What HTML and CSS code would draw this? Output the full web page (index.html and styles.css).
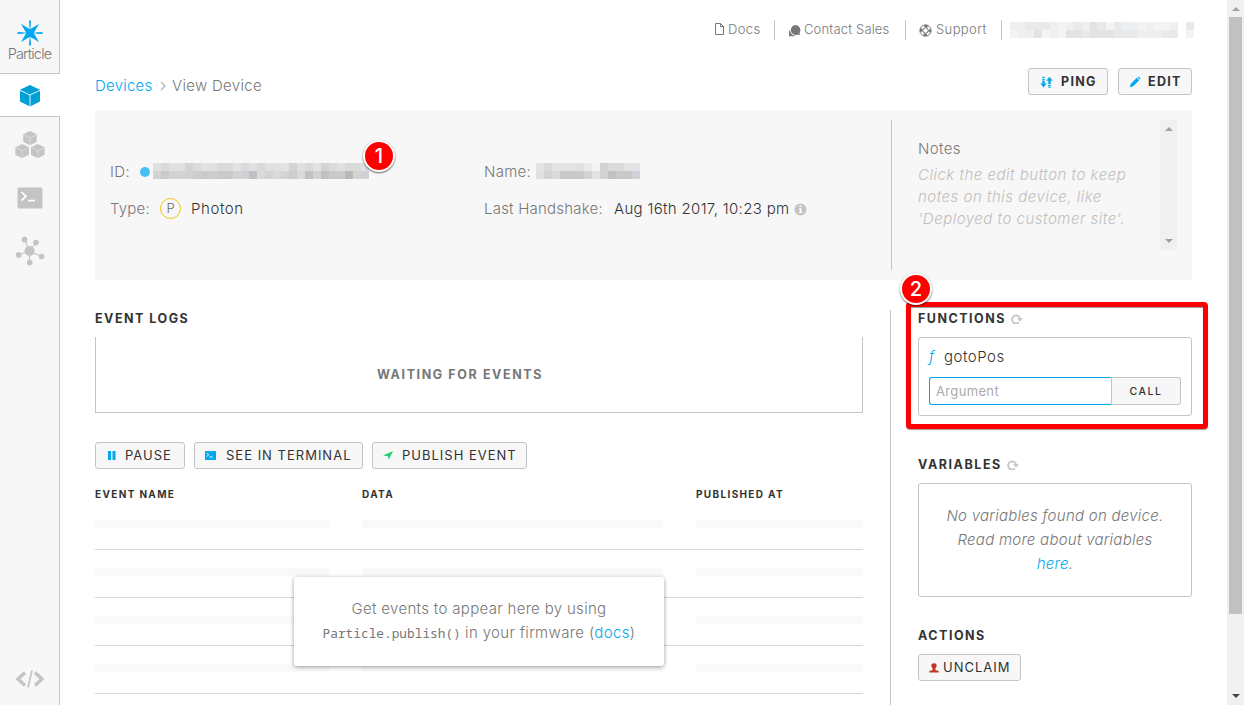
FILE: index.html
```html
<!DOCTYPE html>
<html lang="en">
<head>
<meta charset="utf-8">
<title>View Device</title>
<link rel="stylesheet" href="styles.css">
</head>
<body>
<div class="app">
  <nav class="sidebar">
    <div class="brand">
      <svg width="26" height="26" viewBox="0 0 26 26" fill="#00a8f0"><path d="M4 4 13 9.300 22 4 16.700 13 22 22 13 16.700 4 22 9.300 13Z"/><path d="M12.300 5.500 12 0.500h2L13.700 5.500 13 11ZM12.300 20.500 12 25.500h2L13.700 20.500 13 15ZM5.500 12.300.5 12v2L5.500 13.700 11 13ZM20.500 12.300 25.500 12v2L20.500 13.700 15 13Z"/></svg>
      <span class="brand-name">Particle</span>
    </div>
    <a class="side-item active"><svg width="22" height="24" viewBox="0 0 22 24"><path d="M11 1 21 5.800V17.500L11 22.500 1 17.500V5.800Z" fill="#009fd6"/><path d="M1 6.300 11 11 21 6.300M11 11V23" fill="none" stroke="#d8f2fc" stroke-width="1"/></svg></a>
    <a class="side-item cubes"><svg width="30" height="30" viewBox="0 0 30 30"><g fill="#c4c4c4"><path d="M15 1 21.800 4.300V11.700L15 15.200 8.200 11.700V4.300Z"/><path d="M7.200 14 14 17.300V24.700L7.200 28.200.4 24.700V17.300Z"/><path d="M22.800 14 29.600 17.300V24.700L22.800 28.200 16 24.700V17.300Z"/></g><path d="M8.500 4.700 15 8 21.500 4.700M15 8V15M.7 17.700 7.200 21 13.700 17.700M7.200 21V28M16.300 17.700 22.800 21 29.300 17.700M22.800 21V28" fill="none" stroke="#e2e2e2" stroke-width=".7"/></svg></a>
    <a class="side-item"><svg width="26" height="22" viewBox="0 0 26 22"><rect x=".5" y=".5" width="25" height="21" rx="1.500" fill="#c4c4c4"/><path d="M4.500 5 9 9.300 4.500 13.600M11 13.600h7" fill="none" stroke="#fff" stroke-width="1.700"/></svg></a>
    <a class="side-item"><svg width="30" height="30" viewBox="0 0 30 30" fill="#c4c4c4"><path d="M14.500 15 9.500 3.500M14.500 15 21 6.500M14.500 15 3.500 19M14.500 15 26.500 20.500M14.500 15V27" stroke="#c4c4c4" stroke-width="1.200"/><circle cx="14.500" cy="15" r="5"/><circle cx="9.500" cy="3.700" r="2.900"/><circle cx="21" cy="6.600" r="2.800"/><circle cx="3.700" cy="18.900" r="2.800"/><circle cx="26.500" cy="20.500" r="2.800"/><circle cx="14.700" cy="26.600" r="2.800"/></svg></a>
    <a class="side-item code"><svg width="30" height="20" viewBox="0 0 30 20" fill="none" stroke="#c4c4c4"><path d="M10 3.500 3 10 10 16.500M20 3.500 27 10 20 16.500" stroke-width="3.400"/><path d="M17 1.500 13 18.500" stroke-width="1.700"/></svg></a>
  </nav>

  <main class="content">
    <header class="topbar">
      <a class="top-link docs"><svg width="9" height="12" viewBox="0 0 9 12" fill="none" stroke="#777"><path d="M.5.5H5.500L8.500 3.500V11.500H.5ZM5.500.5V3.500H8.500"/></svg><span>Docs</span></a>
      <a class="top-link sales"><svg width="13" height="13" viewBox="0 0 13 13" fill="#777"><path d="M7.500 1a5 5 0 0 1 4 7.800l.8 2.200-2.300-.5A5 5 0 1 1 7.500 1Z"/><path d="M2 5.500A5.800 5.800 0 0 0 7.500 11.700 5 5 0 0 1 3.500 12L.8 12.500 1.200 10A5 5 0 0 1 2 5.500Z"/></svg><span>Contact Sales</span></a>
      <a class="top-link support"><svg width="13" height="13" viewBox="0 0 13 13" fill="none" stroke="#777"><circle cx="6.500" cy="6.500" r="5.600" stroke-width="1"/><circle cx="6.500" cy="6.500" r="4.300" stroke-width="2.800" stroke-dasharray="3.380 3.380" stroke-dashoffset="1.690"/><circle cx="6.500" cy="6.500" r="2.700"/></svg><span>Support</span></a>
      <span class="user"><span class="mosaic m21"><i class="p1"></i><i class="p1"></i><i class="p2"></i><i class="p2"></i><i class="p2"></i><i class="p1"></i><i class="p0"></i><i class="p1"></i><i class="p2"></i><i class="p1"></i><i class="p3"></i><i class="p2"></i><i class="p0"></i><i class="p2"></i><i class="p1"></i><i class="p1"></i><i class="p0"></i><i class="p1"></i><i class="p0"></i><i class="p0"></i><i class="p1"></i><i class="p0"></i><i class="p1"></i><i class="p1"></i><i class="p3"></i><i class="p0"></i><i class="p1"></i><i class="p0"></i><i class="p3"></i><i class="p3"></i><i class="p2"></i><i class="p3"></i><i class="p3"></i><i class="p3"></i><i class="p2"></i><i class="p2"></i><i class="p2"></i><i class="p1"></i><i class="p1"></i><i class="p1"></i><i class="p2"></i><i class="p2"></i></span><span class="mosaic m1"><i class="p2"></i><i class="p0"></i></span></span>
    </header>

    <div class="title-row">
      <div class="crumbs"><a class="link">Devices</a><svg width="6" height="10" viewBox="0 0 6 10" fill="none" stroke="#bbb" stroke-width="1.500"><path d="M1 1 5 5 1 9"/></svg><span class="crumb-now">View Device</span></div>
      <div class="title-actions">
        <button class="btn strong ping"><svg width="13" height="12" viewBox="0 0 13 12" fill="#00a8f0"><path d="M2.300 4.500h2.400v3h2L3.500 11.500.3 7.500h2ZM2.300 2.700h2.400v1.200H2.300ZM2.300 .8h2.400v1.200H2.300Z"/><path d="M8.300 8h2.400V4.800h2L9.500.8 6.300 4.800h2ZM8.300 8.700h2.400v1.200H8.300ZM8.300 10.600h2.400v1.200H8.300Z"/></svg><span>PING</span></button>
        <button class="btn strong edit"><svg width="12" height="12" viewBox="0 0 12 12" fill="#00a8f0"><path d="M.8 11.200 1.700 7.900 7.800 1.800 10.200 4.200 4.100 10.300ZM8.500 1.200 9.500.4 11.600 2.500 10.800 3.500Z"/></svg><span>EDIT</span></button>
      </div>
    </div>

    <section class="info">
      <div class="info-col first">
        <div class="field"><span class="label">ID:</span><b class="dot"></b><span class="mosaic m27"><i class="p4"></i><i class="p5"></i><i class="p4"></i><i class="p4"></i><i class="p6"></i><i class="p5"></i><i class="p3"></i><i class="p4"></i><i class="p5"></i><i class="p5"></i><i class="p3"></i><i class="p5"></i><i class="p4"></i><i class="p5"></i><i class="p4"></i><i class="p4"></i><i class="p3"></i><i class="p6"></i><i class="p4"></i><i class="p5"></i><i class="p3"></i><i class="p6"></i><i class="p5"></i><i class="p4"></i><i class="p5"></i><i class="p5"></i><i class="p4"></i><i class="p6"></i><i class="p7"></i><i class="p6"></i><i class="p6"></i><i class="pb"></i><i class="pw"></i><i class="p7"></i><i class="pw"></i><i class="p7"></i><i class="p7"></i><i class="p6"></i><i class="pb"></i><i class="p8"></i><i class="p5"></i><i class="p6"></i><i class="p5"></i><i class="p6"></i><i class="pw"></i><i class="p5"></i><i class="p8"></i><i class="p6"></i><i class="p8"></i><i class="p7"></i><i class="p7"></i><i class="p9"></i><i class="p6"></i><i class="pb"></i></span></div>
        <div class="field"><span class="label type">Type:</span><span class="badge">P</span><span class="value">Photon</span></div>
        <span class="marker one">1</span>
      </div>
      <div class="info-col second">
        <div class="field"><span class="label name">Name:</span><span class="mosaic m13"><i class="p3"></i><i class="p5"></i><i class="p3"></i><i class="p3"></i><i class="p3"></i><i class="p4"></i><i class="p2"></i><i class="p0"></i><i class="p6"></i><i class="p5"></i><i class="p5"></i><i class="p3"></i><i class="p3"></i><i class="p4"></i><i class="p6"></i><i class="p5"></i><i class="p7"></i><i class="p7"></i><i class="p7"></i><i class="p6"></i><i class="p3"></i><i class="p6"></i><i class="p8"></i><i class="p7"></i><i class="p7"></i><i class="pb"></i></span></div>
        <div class="field"><span class="label shake">Last Handshake:</span><span class="value date">Aug 16th 2017, 10:23 pm</span><svg class="info-icon" width="13" height="13" viewBox="0 0 13 13"><circle cx="6.500" cy="6.500" r="6" fill="#c4c4c4"/><path d="M5.500 2.500h2v1.500h-2ZM5 5.300h2.500V9h.8v1H4.900V9h.8V6.300H5Z" fill="#fff"/></svg></div>
      </div>
      <div class="notes">
        <div class="notes-text"><h3>Notes</h3><p>Click the edit button to keep<br>notes on this device, like<br>'Deployed to customer site'.</p></div>
        <div class="notes-scroll"><i class="arrow up"></i><i class="arrow down"></i></div>
      </div>
    </section>

    <div class="columns">
      <section class="logs">
        <h2>EVENT LOGS</h2>
        <div class="waiting">WAITING FOR EVENTS</div>
        <div class="log-actions">
          <button class="btn pause"><svg width="8" height="9" viewBox="0 0 8 9" fill="#00a8f0"><path d="M0 0h3v9H0ZM4.500 0h3v9h-3Z"/></svg><span>PAUSE</span></button>
          <button class="btn terminal"><svg width="11" height="9" viewBox="0 0 11 9"><path d="M0 0h11v9H0Z" fill="#00a8f0"/><path d="M1.700 2 3.700 3.800 1.700 5.600M4.500 6h3" fill="none" stroke="#fff"/></svg><span>SEE IN TERMINAL</span></button>
          <button class="btn publish"><svg width="10" height="9" viewBox="0 0 10 9" fill="#2ecc71"><path d="M10 0 5.800 8.800 4.900 5.300 0 4.600Z"/></svg><span>PUBLISH EVENT</span></button>
        </div>
        <div class="table">
          <div class="row head"><span>EVENT NAME</span><span>DATA</span><span>PUBLISHED AT</span></div>
          <div class="row"><i></i><i></i><i></i></div>
          <div class="row"><i></i><i></i><i></i></div>
          <div class="row"><i></i><i></i><i></i></div>
          <div class="row"><i></i><i></i><i></i></div>
          <div class="hint"><span class="hint-a">Get events to appear here by using</span><br><code>Particle.publish()</code> <span class="hint-b">in your firmware (<a class="link">docs</a>)</span></div>
        </div>
      </section>

      <aside class="side">
        <section class="functions">
          <h2><span>FUNCTIONS</span><svg width="12" height="10" viewBox="0 0 12 10"><path d="M7.900 8.300A4 4 0 1 1 9 4.500" fill="none" stroke="#c4c4c4" stroke-width="1.700"/><path d="M6 4.300H12L9 7.500Z" fill="#c4c4c4"/></svg></h2>
          <div class="fn-box">
            <div class="fn-name"><em>f</em>gotoPos</div>
            <div class="fn-call"><input class="arg" placeholder="Argument"><button class="call">CALL</button></div>
          </div>
          <div class="highlight"></div>
          <span class="marker two">2</span>
        </section>
        <section class="variables">
          <h2><span class="wide">VARIABLES</span><svg width="12" height="10" viewBox="0 0 12 10"><path d="M7.900 8.300A4 4 0 1 1 9 4.500" fill="none" stroke="#c4c4c4" stroke-width="1.700"/><path d="M6 4.300H12L9 7.500Z" fill="#c4c4c4"/></svg></h2>
          <p class="var-box">No variables found on device.<br>Read more about variables<br><a class="link">here</a>.</p>
        </section>
        <section class="actions">
          <h2>ACTIONS</h2>
          <button class="btn unclaim"><svg width="10" height="10" viewBox="0 0 10 10" fill="#c0392b"><path d="M5 .3C7.200 .3 7.800 1.500 7.600 3 7.500 4.300 6.800 5 6.400 5.500V7L9.700 8V9.500H.3V8L3.600 7V5.500C3.200 5 2.500 4.300 2.400 3 2.200 1.500 2.800 .3 5 .3Z"/></svg><span>UNCLAIM</span></button>
        </section>
      </aside>
    </div>
  </main>

  <div class="scrollbar"><i class="arrow up"></i><div class="thumb"></div><i class="arrow down dark"></i></div>
</div>
</body>
</html>
```
FILE: styles.css
```css
* { box-sizing: border-box; }
body { margin: 0; height: 705px; overflow: hidden; background: #fff; color: #333; font: 360 15px/20px Inter, "Liberation Sans", sans-serif; }
h2, h3, p { margin: 0; }
svg { display: block; flex: none; }
.link { color: #00a8f0; }

.app { display: grid; grid-template-columns: 60px 1fr 17px; height: 705px; }

.sidebar { display: flex; flex-direction: column; background: #f7f7f7; border-right: 1px solid #c4c4c4; height: 705px; }
.brand { height: 74px; padding-top: 20px; display: flex; flex-direction: column; align-items: center; border-bottom: 1px solid #c4c4c4; }
.brand-name { font: 300 14.500px/16px Inter, sans-serif; letter-spacing: -0.8px; color: #777; }
.side-item { height: 53px; display: flex; align-items: center; justify-content: center; }
.side-item.active { height: 43px; padding-top: 2px; background: #fff; border-bottom: 1px solid #c4c4c4; margin-right: -1px; }
.side-item.cubes { height: 54px; margin-top: 1px; margin-bottom: -1px; }
.side-item.code { height: 20px; margin-top: auto; margin-bottom: 16px; }

.content { padding: 0 35px; height: 705px; overflow: hidden; }
.topbar { display: flex; justify-content: flex-end; height: 60px; padding-top: 20px; margin-right: -2px; }
.top-link { display: flex; align-items: center; height: 20px; font-size: 13px; letter-spacing: .38px; color: #777; border-right: 1px solid #c4c4c4; }
.top-link span { margin-top: -2px; }
.docs { width: 60px; gap: 4px; }
.docs svg { margin-top: -2px; }
.sales { width: 131px; padding-left: 13px; gap: 3px; letter-spacing: .16px; }
.support { width: 96px; padding-left: 13px; gap: 4px; }
.sales svg, .support svg { margin-top: 1px; }
.user { display: flex; gap: 8px; padding: 2px 0 0 8px; }

.mosaic { display: grid; grid-template-columns: repeat(27, 8px); grid-auto-rows: 8px; height: 16px; flex: none; }
.m21 { grid-template-columns: repeat(21, 8px); }
.m13 { grid-template-columns: repeat(13, 8px); }
.m1 { grid-template-columns: 8px; }
.p0 { background: #f4f4f3; }
.p1 { background: #eeeff0; }
.p2 { background: #e8e9ea; }
.p3 { background: #e4e3e3; }
.p4 { background: #e0e0e0; }
.p5 { background: #d9dbdb; }
.p6 { background: #d3d3d4; }
.p7 { background: #cacacb; }
.p8 { background: #c1c1c1; }
.p9 { background: #bdb6b6; }
.pb { background: #ced1d8; }
.pw { background: #d0ccc9; }

.title-row { display: flex; justify-content: space-between; height: 50px; padding-top: 8px; }
.crumbs { display: flex; align-items: center; height: 36px; }
.crumbs .link { width: 65px; letter-spacing: .22px; }
.crumb-now { margin-left: 6px; color: #777; letter-spacing: .3px; }
.title-actions { display: flex; gap: 10px; }

.btn { display: flex; align-items: center; height: 27px; margin: 0; padding: 0 10px; background: #f7f7f7; border: 1px solid #c4c4c4; border-radius: 3px; color: #333; font: 400 13px/20px Inter, sans-serif; letter-spacing: 1px; white-space: nowrap; }
.btn span { margin-top: -1px; }
.btn.strong { font-size: 12.500px; font-weight: 700; letter-spacing: 1.300px; }
.btn.strong span { margin-top: 1px; }
.ping { width: 80px; padding-left: 11px; }
.ping svg { margin-right: 8px; }
.edit { width: 74px; }
.edit svg { margin-right: 7px; }

.info { display: grid; grid-template-columns: 374px 422px 301px; height: 170px; background: #f7f7f7; }
.info-col { position: relative; padding: 43px 0 0 15px; display: flex; flex-direction: column; }
.field { display: flex; align-items: center; height: 37px; }
.label { color: #777; letter-spacing: .35px; }
.type { width: 41px; letter-spacing: .2px; }
.shake { width: 120px; letter-spacing: .22px; }
.dot { width: 10px; height: 10px; margin: 0 3px 0 10px; border-radius: 50%; background: #45c1f5; }
.first .mosaic, .second .mosaic { margin-top: -1px; }
.badge { width: 21px; height: 21px; margin: 0 10px 0 9px; border: 1px solid #f1c40f; border-radius: 50%; text-align: center; font-size: 13px; line-height: 19px; color: #666; }
.value { color: #333; letter-spacing: .58px; }
.name { width: 52px; letter-spacing: .25px; }
.date { width: 176px; margin-left: 10px; letter-spacing: .32px; white-space: nowrap; }
.info-icon { margin-left: 4px; margin-top: 1px; }
.notes { display: flex; justify-content: space-between; height: 150px; margin-top: 10px; padding: 0 15px 0 26px; border-left: 1px solid #c4c4c4; }
.notes h3 { margin-top: 18px; font-size: 15px; font-weight: 360; line-height: 22px; letter-spacing: .35px; color: #777; }
.notes p { margin-top: 4px; font: italic 360 15px/22px Inter, sans-serif; letter-spacing: .5px; color: #c0c0c0; white-space: nowrap; }
.notes-scroll { display: flex; flex-direction: column; justify-content: space-between; align-items: center; width: 17px; height: 130px; padding: 7px 0; background: #f0f0f0; }
.arrow { width: 0; height: 0; border: 4px solid transparent; }
.arrow.up { border-top: 0; border-bottom-color: #a0a0a0; }
.arrow.down { border-bottom: 0; border-top-color: #a0a0a0; }
.arrow.dark { border-top-color: #444; }

.marker { position: absolute; width: 32px; height: 32px; border: 2px solid #fff; border-radius: 50%; background: #f00; box-shadow: 0 1px 2px rgba(0, 0, 0, .6); color: #fff; font: 500 20px/28px Inter, sans-serif; text-align: center; }
.one { left: 268px; top: 30px; }
.two { left: -18px; top: -37px; }

.columns { display: grid; grid-template-columns: 768px 1fr; column-gap: 27px; padding-top: 30px; height: 425px; }
h2 { display: flex; align-items: center; height: 18px; font-size: 12.500px; line-height: 18px; font-weight: 700; letter-spacing: 1.500px; color: #333; }
h2 svg { margin-left: 5px; margin-top: -1px; }
.wide { letter-spacing: 1.550px; }
.waiting { height: 76px; margin-top: 9px; border: 1px solid #c4c4c4; border-top: 0; line-height: 75px; text-align: center; color: #777; font-size: 12.500px; font-weight: 700; letter-spacing: 1.600px; padding-right: 38px; }
.log-actions { display: flex; gap: 9px; margin-top: 29px; }
.pause { width: 90px; padding-left: 12px; }
.pause svg { margin-right: 9px; }
.terminal { width: 169px; }
.terminal svg { margin-right: 10px; }
.publish { width: 155px; }
.publish svg { margin-right: 9px; }

.table { position: relative; margin-top: 15px; }
.row { display: grid; grid-template-columns: 234px 301px 167px; column-gap: 33px; height: 48px; padding-top: 18px; border-bottom: 1px solid #d5d5d5; }
.row i { height: 8px; background: #f9f9f9; }
.head { height: 18px; padding: 0; border: 0; font-size: 10px; line-height: 20px; font-weight: 700; letter-spacing: 1.350px; }
.hint { position: absolute; left: 199px; top: 93px; width: 370px; height: 89px; padding-top: 20px; background: #fff; border-radius: 3px; box-shadow: 0 1px 4px rgba(0, 0, 0, .4); text-align: center; line-height: 24px; color: #777; white-space: nowrap; }
.hint-a { letter-spacing: .32px; }
.hint-b { letter-spacing: .36px; }
.hint code { font: 12.800px/24px "Noto Sans Mono", "DejaVu Sans Mono", monospace; }

.side { padding-left: 27px; border-left: 1px solid #c4c4c4; height: 395px; }
.functions { position: relative; height: 146px; }
.fn-box { height: 79px; margin-top: 9px; padding: 10px; border: 1px solid #c4c4c4; border-radius: 3px; }
.fn-name { height: 29px; line-height: 18px; letter-spacing: .5px; }
.fn-name em { display: inline-block; width: 15px; color: #00a8f0; }
.fn-call { display: flex; }
.arg { width: 183px; height: 28px; padding: 0 6px; border: 1px solid #00a8e6; border-right-color: #c4c4c4; border-radius: 3px 0 0 3px; font: 13px Inter, sans-serif; letter-spacing: .35px; }
.arg::placeholder { color: #aaa; }
.call { width: 69px; height: 28px; padding: 0; border: 1px solid #c4c4c4; border-left: 0; border-radius: 0 3px 3px 0; background: #f7f7f7; font: 500 10.500px Inter, sans-serif; letter-spacing: 1.500px; color: #333; }
.highlight { position: absolute; left: -12px; top: -8px; width: 302px; height: 127px; border: 5px solid #f00; border-radius: 4px; box-shadow: 0 1px 1px rgba(0, 0, 0, .4), inset 0 1px 1px rgba(0, 0, 0, .4); }
.variables { height: 171px; }
.var-box { height: 114px; margin-top: 9px; padding-top: 20px; border: 1px solid #c4c4c4; border-radius: 3px; text-align: center; font: italic 360 15px/24px Inter, sans-serif; letter-spacing: .26px; color: #777; }
.unclaim { width: 103px; margin-top: 9px; }
.unclaim svg { margin-right: 4px; }

.scrollbar { display: flex; flex-direction: column; align-items: center; height: 705px; background: #f0f0f0; padding: 7px 0; }
.thumb { width: 13px; height: 597px; margin: 6px 0 auto; background: #c1c1c1; }
```
